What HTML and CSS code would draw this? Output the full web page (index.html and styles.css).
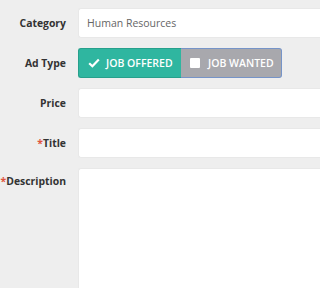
FILE: index.html
```html
<!DOCTYPE html>
<html>
<head>
<meta charset="utf-8">
<link rel="stylesheet" href="styles.css">
</head>
<body>
<form class="form">
  <div class="row">
    <label class="label">Category</label>
    <div class="field"><div class="input">Human Resources</div></div>
  </div>
  <div class="row">
    <label class="label">Ad Type</label>
    <div class="field">
      <div class="toggle">
        <div class="opt opt-on">
          <svg class="check" viewBox="0 0 12 10" width="12" height="10"><path d="M1.2 5.2 L4.4 8.2 L10.8 1.6" fill="none" stroke="#fff" stroke-width="2.2"/></svg>
          <span>JOB OFFERED</span>
        </div>
        <div class="opt opt-off">
          <span class="box"></span>
          <span>JOB WANTED</span>
        </div>
      </div>
    </div>
  </div>
  <div class="row">
    <label class="label">Price</label>
    <div class="field"><div class="input"></div></div>
  </div>
  <div class="row">
    <label class="label"><span class="req">*</span>Title</label>
    <div class="field"><div class="input"></div></div>
  </div>
  <div class="row row-top">
    <label class="label"><span class="req">*</span>Description</label>
    <div class="field"><div class="textarea"></div></div>
  </div>
</form>
</body>
</html>
```
FILE: styles.css
```css
html, body {
  margin: 0;
  padding: 0;
  background: #eeeeee;
  font-family: "Open Sans", "Liberation Sans", sans-serif;
}
body {
  height: 288px;
  overflow: hidden;
}
.form {
  display: flex;
  flex-direction: column;
  gap: 10px;
  padding-top: 8px;
}
.row {
  display: grid;
  grid-template-columns: 66px 1fr;
  column-gap: 12px;
  align-items: center;
  height: 30px;
}
.row-top {
  align-items: start;
  height: 120px;
}
.row-top .label {
  padding-top: 6px;
}
.label {
  text-align: right;
  font-weight: 700;
  font-size: 10.4px;
  color: #333333;
  white-space: nowrap;
}
.req {
  color: #e0533c;
}
.field {
  height: 100%;
}
.input, .textarea {
  box-sizing: border-box;
  height: 30px;
  background: #ffffff;
  border: 1px solid #e8e8e8;
  border-right: none;
  border-radius: 3px 0 0 3px;
  font-size: 10.5px;
  color: #666666;
  padding-left: 8px;
  line-height: 28px;
}
.textarea {
  height: 120px;
  border-bottom: none;
  border-radius: 3px 0 0 0;
}
.toggle {
  display: flex;
  width: 204px;
  height: 30px;
  box-sizing: border-box;
}
.opt {
  display: flex;
  align-items: center;
  gap: 5px;
  font-size: 10.5px;
  font-weight: 600;
  color: #ffffff;
  box-sizing: border-box;
  height: 30px;
}
.opt-on {
  width: 103px;
  background: #2fb6a0;
  border: 1px solid #27a08c;
  border-right: none;
  border-radius: 3px 0 0 3px;
  padding-left: 9px;
}
.opt-off {
  flex: 1;
  background: #a8a8ad;
  border: 1px solid #7694c8;
  border-left: none;
  border-radius: 0 3px 3px 0;
  padding-left: 9px;
  gap: 8px;
}
.check {
  display: block;
  margin-right: 1px;
}
.box {
  width: 10px;
  height: 10px;
  background: #ffffff;
  border-radius: 1px;
}
```
